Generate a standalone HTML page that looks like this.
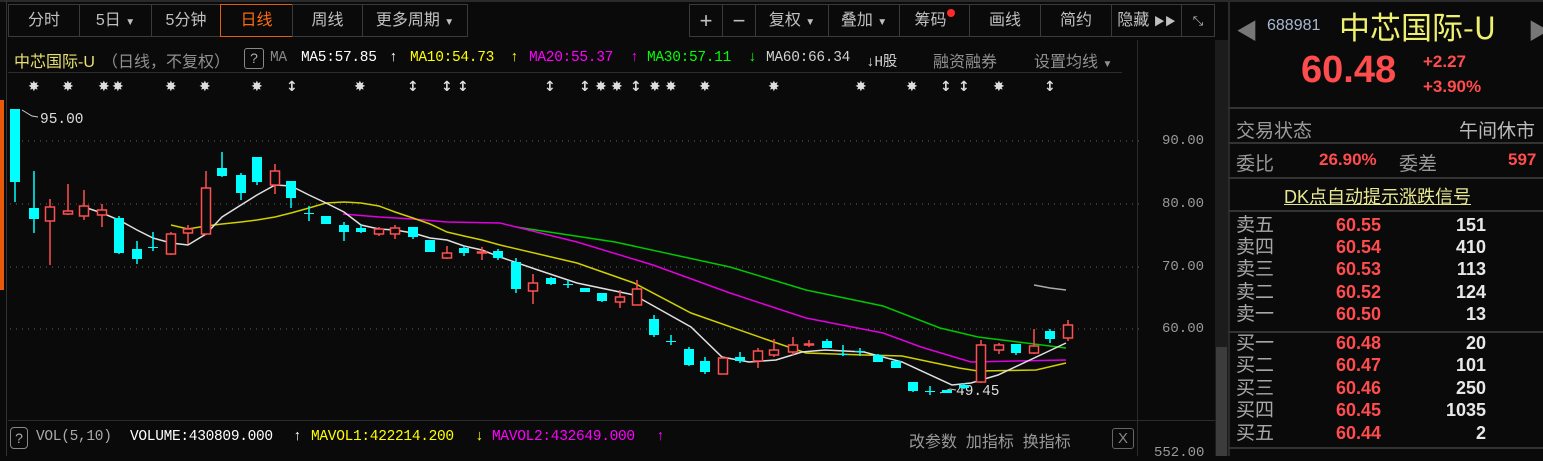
<!DOCTYPE html>
<html><head><meta charset="utf-8"><style>
*{margin:0;padding:0;box-sizing:border-box}
body{width:1543px;height:456px;background:#0a0a0a;overflow:hidden;position:relative;font-family:"Liberation Sans","Noto Sans CJK SC",sans-serif;color:#c8c8c8}
.a{position:absolute;white-space:nowrap}
.btn{position:absolute;top:4px;height:33px;border:1px solid #3a3a3a;background:#0a0a0a;color:#c0c0c0;font-size:16px;line-height:31px;text-align:center}
.m{font-family:"Liberation Mono","Noto Sans CJK SC",monospace;font-size:14px}
.l{position:absolute;top:50px;font-family:"Liberation Mono",monospace;font-size:14.5px;white-space:nowrap;letter-spacing:-0.3px}
.vb{position:absolute;top:429px;font-family:"Liberation Mono",monospace;font-size:14.5px;white-space:nowrap;letter-spacing:-0.3px}
.row{position:absolute;left:1236px;font-size:19px;color:#a8a8a8;height:22px;line-height:22px}
.p{position:absolute;left:1336px;font-size:18px;font-weight:bold;color:#ff4c4c}
.v{position:absolute;right:57px;font-size:18px;font-weight:bold;color:#e8e8e8}
</style></head><body>
<div class="a" style="left:0;top:0;width:1543px;height:2px;background:#2a2a2a"></div>
<div class="a" style="left:0;top:100px;width:4px;height:190px;background:#e85a0a"></div>
<div class="a" style="left:6px;top:0;width:1px;height:456px;background:#333"></div>
<div class="btn" style="left:8px;width:72px">分时</div>
<div class="btn" style="left:79px;width:73px">5日 <span style="font-size:10px">▼</span></div>
<div class="btn" style="left:151px;width:70px">5分钟</div>
<div class="btn" style="left:220px;width:73px;border-color:#e0600a;color:#ff6a10">日线</div>
<div class="btn" style="left:292px;width:71px">周线</div>
<div class="btn" style="left:362px;width:106px">更多周期 <span style="font-size:10px">▼</span></div>
<div class="btn" style="left:689px;width:34px;font-size:22px">+</div>
<div class="btn" style="left:722px;width:34px;font-size:22px">−</div>
<div class="btn" style="left:755px;width:74px">复权 <span style="font-size:10px">▼</span></div>
<div class="btn" style="left:828px;width:72px">叠加 <span style="font-size:10px">▼</span></div>
<div class="btn" style="left:899px;width:71px">筹码<span style="display:inline-block;width:8px;height:8px;border-radius:4px;background:#ff2a2a;vertical-align:8px"></span></div>
<div class="btn" style="left:969px;width:72px">画线</div>
<div class="btn" style="left:1040px;width:72px">简约</div>
<div class="btn" style="left:1111px;width:71px">隐藏 <span style="font-size:11px">▶▶</span></div>
<div class="btn" style="left:1181px;width:34px;font-size:13px">⤡</div>
<!-- title row -->
<div class="a" style="left:14px;top:48px;font-size:16px;color:#e8e070">中芯国际-U</div>
<div class="a" style="left:102px;top:48px;font-size:16px;color:#909090">（日线，不复权）</div>
<div class="a" style="left:244px;top:48px;border:1px solid #888;border-radius:3px;width:20px;height:21px;text-align:center;line-height:19px;color:#aaa;font-size:14px">?</div>
<div class="l" style="left:270px;color:#888">MA</div>
<div class="l" style="left:301px;color:#fff">MA5:57.85</div>
<div class="l" style="left:389px;color:#fff">↑</div>
<div class="l" style="left:410px;color:#ffff00">MA10:54.73</div>
<div class="l" style="left:510px;color:#ffff00">↑</div>
<div class="l" style="left:529px;color:#ff00ff">MA20:55.37</div>
<div class="l" style="left:630px;color:#ff00ff">↑</div>
<div class="l" style="left:647px;color:#00ff00">MA30:57.11</div>
<div class="l" style="left:748px;color:#00ff00">↓</div>
<div class="l" style="left:766px;color:#d0d0d0">MA60:66.34</div>
<div class="l" style="left:866px;color:#d0d0d0">↓H股</div>
<div class="a" style="left:933px;top:48px;font-size:16px;color:#909090">融资融券</div>
<div class="a" style="left:1034px;top:48px;font-size:16px;color:#909090">设置均线 <span style="font-size:10px">▼</span></div>
<div class="a" style="left:8px;top:72px;width:1114px;height:1px;background:#2c2c2c"></div>
<div class="a" style="left:1137px;top:40px;width:1px;height:416px;background:#2c2c2c"></div>
<div class="a" style="left:8px;top:420px;width:1208px;height:1px;background:#2c2c2c"></div>
<div class="a" style="left:1215px;top:40px;width:13px;height:416px;background:#1c1c1c"></div>
<div class="a" style="left:1216px;top:347px;width:11px;height:109px;background:#3c3c3c"></div>
<div class="a" style="left:1228px;top:0;width:2px;height:456px;background:#2a2a2a"></div>
<div class="a m" style="left:1162px;top:133px;color:#999">90.00</div>
<div class="a m" style="left:1162px;top:196px;color:#999">80.00</div>
<div class="a m" style="left:1162px;top:259px;color:#999">70.00</div>
<div class="a m" style="left:1162px;top:321px;color:#999">60.00</div>
<div class="a m" style="left:1154px;top:445px;color:#999">552.00</div>
<svg class="a" style="left:0;top:0" width="1215" height="456" id="ch">
<g stroke="#444" stroke-dasharray="1 5" stroke-width="1.5">
<line x1="10" y1="141" x2="1140" y2="141"/><line x1="10" y1="204" x2="1140" y2="204"/><line x1="10" y1="267" x2="1140" y2="267"/><line x1="10" y1="329" x2="1140" y2="329"/></g>
<g fill="none" stroke-width="1.5">
<polyline stroke="#00c800" points="516,227 615,242 730,267 806,290 883,306 940,328 978,337 1066,348"/>
<polyline stroke="#e000e0" points="343,214 379,217 413,219 447,222 500,223 577,242 653,265 730,293 806,318 883,333 921,347 971,362 1066,360"/>
<polyline stroke="#d0d000" points="171,225 188,229 206,226 222,224 241,222 257,220 275,217 291,213 309,208 326,203 344,202 361,203 379,206 395,212 413,218 430,224 447,232 464,236 482,240 500,245 577,263 634,283 691,313 768,340 806,353 864,355 902,356 959,368 978,371 1036,370 1066,363"/>
<polyline stroke="#e0e0e0" points="84,207 102,213 119,220 137,230 153,238 171,243 188,245 206,234 222,217 241,205 257,195 275,185 291,186 309,195 326,203 344,212 361,225 379,229 395,230 413,233 430,238 447,240 464,246 482,250 500,257 538,270 577,283 634,295 691,327 722,357 749,362 776,360 802,352 825,350 864,352 902,362 952,385 971,383 998,375 1066,343"/>
<polyline stroke="#aaa" points="1034,285 1050,288 1066,290"/>
<polyline stroke="#ccc" stroke-width="1" points="22,110 32,116 38,117"/>
<polyline stroke="#ccc" stroke-width="1" points="940,393 950,389 956,390"/>
</g>
<text x="40" y="123" fill="#ddd" font-family="Liberation Mono" font-size="14.5">95.00</text>
<text x="956" y="395" fill="#ddd" font-family="Liberation Mono" font-size="14.5">49.45</text>
<g id="cd"></g>
<g id="st" fill="#ddd" font-family="DejaVu Sans" font-size="14" font-weight="bold"></g>
</svg>
<script>
var d=[[15,109,182,109,202,'c'],[34,208,219,171,233,'c'],[50,207,221,199,265,'r'],[68,211,214,184,215,'r'],[84,206,216,190,220,'r'],[102,210,215,204,227,'r'],[119,218,253,216,254,'c'],[137,249,259,241,264,'c'],[153,247,248,232,251,'c'],[171,234,254,232,255,'r'],[188,229,233,225,244,'r'],[206,188,234,171,235,'r'],[222,168,176,152,177,'c'],[241,175,193,173,200,'c'],[257,157,182,157,185,'c'],[275,171,185,164,194,'r'],[291,181,198,181,208,'c'],[309,213,214,206,221,'c'],[326,216,224,216,224,'c'],[344,225,232,222,241,'c'],[361,228,232,225,233,'c'],[379,229,234,227,236,'r'],[395,228,234,225,239,'r'],[413,227,237,227,239,'c'],[430,240,252,240,252,'c'],[447,253,258,246,259,'r'],[464,248,253,246,256,'c'],[482,252,253,247,260,'r'],[498,251,258,249,260,'c'],[516,262,289,258,293,'c'],[533,283,291,274,304,'r'],[551,278,284,277,285,'c'],[568,284,285,280,288,'c'],[585,288,292,288,292,'c'],[602,293,301,293,302,'c'],[620,297,302,290,308,'r'],[637,289,305,280,305,'r'],[654,319,335,315,337,'c'],[671,341,342,335,345,'c'],[689,349,365,347,366,'c'],[705,361,372,357,374,'c'],[723,358,374,358,374,'r'],[740,357,361,352,363,'c'],[758,351,361,348,368,'r'],[774,350,355,339,357,'r'],[793,345,352,337,355,'r'],[809,344,345,340,347,'r'],[827,341,348,339,348,'c'],[843,354,355,345,356,'c'],[860,351,352,348,356,'c'],[878,355,362,354,362,'c'],[896,361,368,361,368,'c'],[913,382,391,382,392,'c'],[930,391,392,386,395,'c'],[947,390,393,390,393,'c'],[964,385,388,383,389,'c'],[981,345,382,340,383,'r'],[999,345,350,343,354,'r'],[1016,344,353,344,355,'c'],[1034,346,353,329,354,'r'],[1050,331,339,329,343,'c'],[1068,325,338,320,341,'r']];
var s='';d.forEach(function(c){var x=c[0],col=c[5]=='c'?'#00ffff':'#ff5050';
s+='<line x1="'+x+'" x2="'+x+'" y1="'+c[3]+'" y2="'+c[4]+'" stroke="'+col+'" stroke-width="1.5"/>';
var h=Math.max(c[2]-c[1],1);
if(c[5]=='c')s+='<rect x="'+(x-5)+'" y="'+c[1]+'" width="10" height="'+h+'" fill="'+col+'"/>';
else s+='<rect x="'+(x-4.5)+'" y="'+c[1]+'" width="9" height="'+h+'" fill="#0a0a0a" stroke="'+col+'" stroke-width="1.5"/>';});
document.getElementById('cd').innerHTML=s;
var st=[[34,'✸'],[68,'✸'],[104,'✸'],[118,'✸'],[171,'✸'],[205,'✸'],[257,'✸'],[292,'↕'],[360,'✸'],[413,'↕'],[447,'↕'],[463,'↕'],[550,'↕'],[585,'↕'],[601,'✸'],[617,'✸'],[636,'↕'],[655,'✸'],[671,'✸'],[705,'✸'],[774,'✸'],[861,'✸'],[912,'✸'],[946,'↕'],[964,'↕'],[999,'✸'],[1050,'↕']];
var t='';st.forEach(function(a){t+='<text x="'+(a[0]-6)+'" y="91">'+a[1]+'</text>'});
document.getElementById('st').innerHTML=t;
</script>
<!-- volume header -->
<div class="a" style="left:10px;top:427px;border:1px solid #888;border-radius:4px;width:18px;height:22px;text-align:center;line-height:20px;color:#aaa;font-size:14px">?</div>
<div class="vb" style="left:36px;color:#aaa">VOL(5,10)</div>
<div class="vb" style="left:130px;color:#fff">VOLUME:430809.000</div>
<div class="vb" style="left:293px;color:#fff">↑</div>
<div class="vb" style="left:311px;color:#ffff00">MAVOL1:422214.200</div>
<div class="vb" style="left:475px;color:#ffff00">↓</div>
<div class="vb" style="left:492px;color:#ff00ff">MAVOL2:432649.000</div>
<div class="vb" style="left:656px;color:#ff00ff">↑</div>
<div class="a" style="left:909px;top:428px;font-size:16px;color:#999">改参数 &nbsp;加指标 &nbsp;换指标</div>
<div class="a" style="left:1112px;top:428px;width:22px;height:21px;border:1px solid #666;border-radius:3px;color:#888;text-align:center;font-size:15px;line-height:19px">X</div>
<!-- right panel -->
<div class="a" style="left:1236px;top:14px;font-size:22px;color:#777">◀</div>
<div class="a" style="left:1528px;top:14px;font-size:22px;color:#777">▶</div>
<div class="a" style="left:1267px;top:17px;font-size:16px;color:#a8b8d0">688981</div>
<div class="a" style="left:1339px;top:8px;font-size:31px;color:#f0f070;font-family:'Noto Sans CJK SC',sans-serif;line-height:36px">中芯国际-U</div>
<div class="a" style="left:1301px;top:48px;font-size:38px;font-weight:bold;color:#ff4c4c;line-height:44px">60.48</div>
<div class="a" style="left:1423px;top:52px;font-size:17px;font-weight:bold;color:#ff4c4c">+2.27</div>
<div class="a" style="left:1423px;top:77px;font-size:17px;font-weight:bold;color:#ff4c4c">+3.90%</div>
<div class="a" style="left:1228px;top:107px;width:315px;height:2px;background:#333"></div>
<div class="a" style="left:1236px;top:116px;font-size:19px;color:#999">交易状态</div>
<div class="a" style="left:1459px;top:116px;font-size:19px;color:#bbb">午间休市</div>
<div class="a" style="left:1228px;top:142px;width:315px;height:2px;background:#333"></div>
<div class="a" style="left:1236px;top:149px;font-size:19px;color:#999">委比</div>
<div class="a" style="left:1319px;top:150px;font-size:17px;font-weight:bold;color:#ff4c4c">26.90%</div>
<div class="a" style="left:1399px;top:149px;font-size:19px;color:#999">委差</div>
<div class="a" style="left:1508px;top:150px;font-size:17px;font-weight:bold;color:#ff4c4c">597</div>
<div class="a" style="left:1228px;top:177px;width:315px;height:2px;background:#333"></div>
<div class="a" style="left:1284px;top:183px;font-size:18px;color:#e8e890;text-decoration:underline">DK点自动提示涨跌信号</div>
<div class="a" style="left:1228px;top:210px;width:315px;height:2px;background:#333"></div>
<div class="a" style="left:1228px;top:331px;width:315px;height:2px;background:#333"></div>
<div class="a" style="left:1228px;top:447px;width:315px;height:2px;background:#333"></div>
<div class="row" style="top:215px">卖五</div><div class="p" style="top:215px">60.55</div><div class="v" style="top:215px">151</div>
<div class="row" style="top:237px">卖四</div><div class="p" style="top:237px">60.54</div><div class="v" style="top:237px">410</div>
<div class="row" style="top:259px">卖三</div><div class="p" style="top:259px">60.53</div><div class="v" style="top:259px">113</div>
<div class="row" style="top:282px">卖二</div><div class="p" style="top:282px">60.52</div><div class="v" style="top:282px">124</div>
<div class="row" style="top:304px">卖一</div><div class="p" style="top:304px">60.50</div><div class="v" style="top:304px">13</div>
<div class="row" style="top:333px">买一</div><div class="p" style="top:333px">60.48</div><div class="v" style="top:333px">20</div>
<div class="row" style="top:355px">买二</div><div class="p" style="top:355px">60.47</div><div class="v" style="top:355px">101</div>
<div class="row" style="top:378px">买三</div><div class="p" style="top:378px">60.46</div><div class="v" style="top:378px">250</div>
<div class="row" style="top:400px">买四</div><div class="p" style="top:400px">60.45</div><div class="v" style="top:400px">1035</div>
<div class="row" style="top:423px">买五</div><div class="p" style="top:423px">60.44</div><div class="v" style="top:423px">2</div>
</body></html>
